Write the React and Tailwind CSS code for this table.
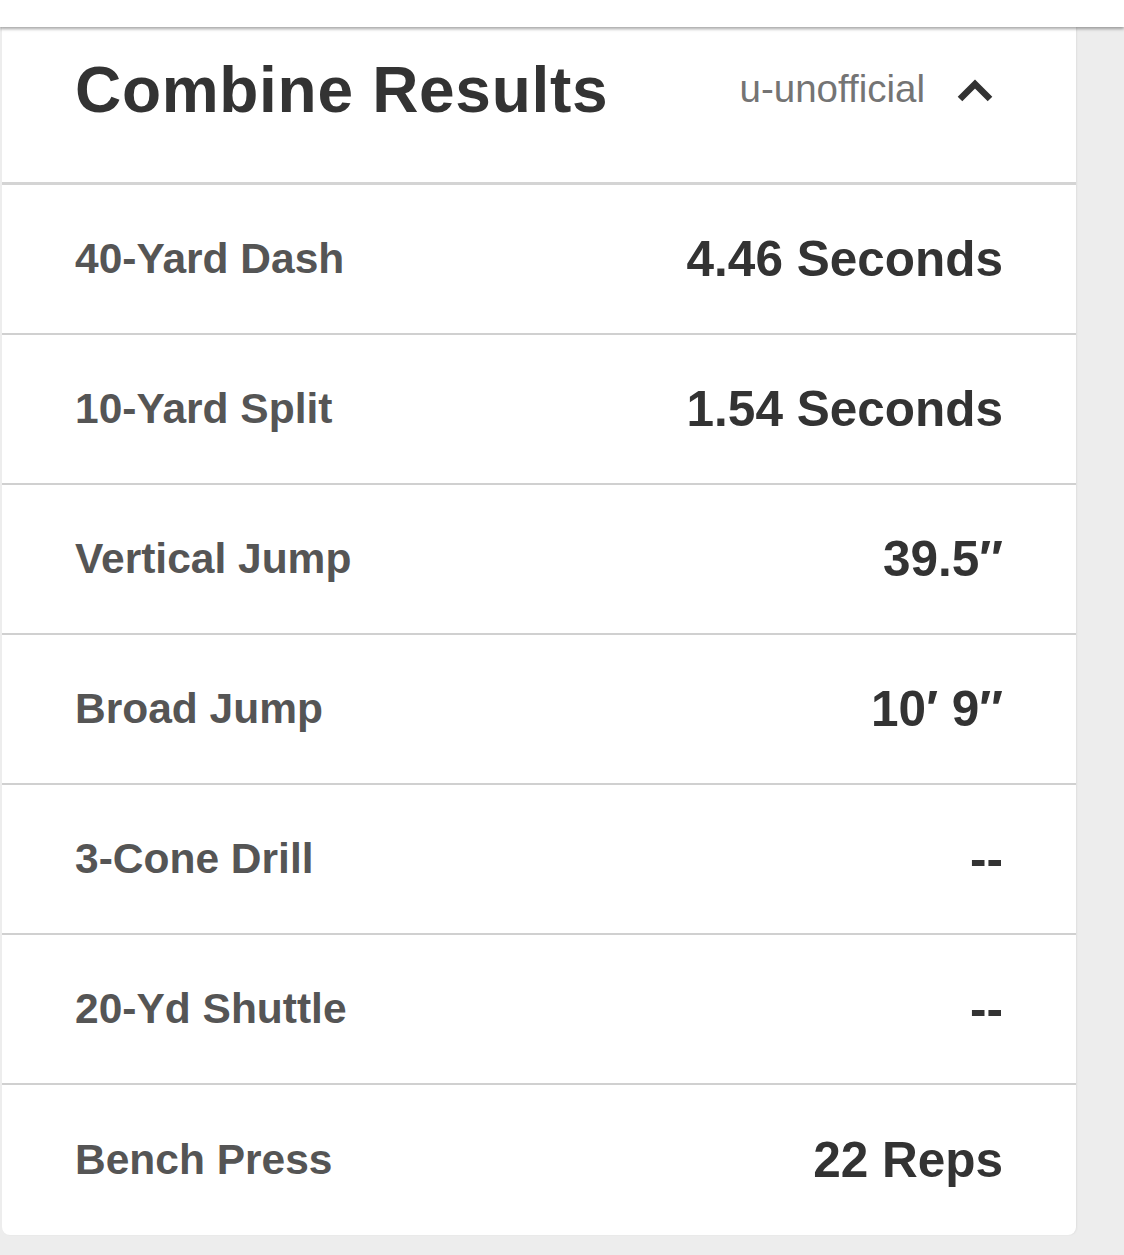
import React from "react";

const rows = [
  ["40-Yard Dash", "4.46 Seconds"],
  ["10-Yard Split", "1.54 Seconds"],
  ["Vertical Jump", "39.5″"],
  ["Broad Jump", "10′ 9″"],
  ["3-Cone Drill", "--"],
  ["20-Yd Shuttle", "--"],
  ["Bench Press", "22 Reps"],
];

export default function App() {
  return (
    <div
      className="w-[1124px] h-[1255px] bg-[#ededed] overflow-hidden flex flex-col"
      style={{ fontFamily: '"Liberation Sans", Arial, sans-serif' }}
    >
      <div className="h-[27px] bg-white shadow-[0_2px_3px_rgba(0,0,0,0.35)] relative z-10 shrink-0" />
      <div className="ml-[2px] w-[1074px] bg-white rounded-b-[8px] shadow-[1px_0_2px_rgba(0,0,0,0.06)] flex flex-col">
        <div className="h-[158px] flex items-center justify-between pl-[73px] pr-[73px] pb-[30px] border-b-[3px] border-[#d4d4d4]">
          <h2 className="text-[64px] font-bold text-[#333] leading-none tracking-[0.7px]">
            Combine Results
          </h2>
          <div className="flex items-center gap-[32px]">
            <span className="text-[38.5px] text-[#747474] leading-none">u-unofficial</span>
            <svg width="36" height="26" viewBox="0 0 36 26" className="mr-[10px]">
              <path d="M3 22 L18 7 L33 22" fill="none" stroke="#333" strokeWidth="6.5" strokeLinejoin="miter" />
            </svg>
          </div>
        </div>
        {rows.map(([label, value], i) => (
          <div
            key={label}
            className={`h-[150px] flex items-center justify-between pl-[73px] pr-[73px] ${
              i < rows.length - 1 ? "border-b-2 border-[#d0d0d0]" : ""
            }`}
          >
            <span className="text-[42.5px] font-bold text-[#555]">{label}</span>
            <span className="text-[49.5px] font-bold text-[#333]">{value}</span>
          </div>
        ))}
      </div>
    </div>
  );
}
